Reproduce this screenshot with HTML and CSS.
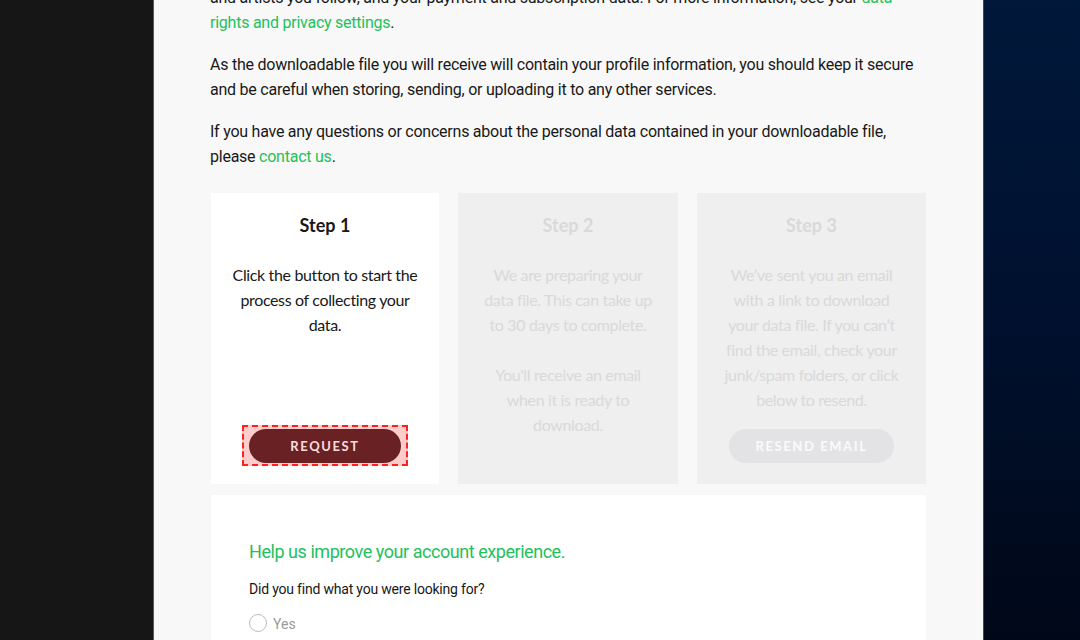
FILE: index.html
```html
<!DOCTYPE html>
<html lang="en">
<head>
<meta charset="utf-8">
<title>Download your data</title>
<link rel="stylesheet" href="styles.css">
</head>
<body>
<div class="shell">
  <aside class="side-left"></aside>
  <main class="page">
    <div class="intro">
      <p class="first">and artists you follow, and your payment and subscription data. For more information, see your <a href="#">data rights and privacy settings</a>.</p>
      <p>As the downloadable file you will receive will contain your profile information, you should keep it secure and be careful when storing, sending, or uploading it to any other services.</p>
      <p>If you have any questions or concerns about the personal data contained in your downloadable file, please <a href="#">contact us</a>.</p>
    </div>

    <div class="steps">
      <section class="step active">
        <h3 class="step-title">Step 1</h3>
        <p class="step-text">Click the button to start the process of collecting your data.</p>
        <div class="step-action">
          <span class="highlight"><button class="btn btn-request">REQUEST</button></span>
        </div>
      </section>
      <section class="step muted">
        <h3 class="step-title">Step 2</h3>
        <p class="step-text">We are preparing your data file. This can take up to 30 days to complete.</p>
        <p class="step-text">You'll receive an email when it is ready to download.</p>
      </section>
      <section class="step muted">
        <h3 class="step-title">Step 3</h3>
        <p class="step-text">We’ve sent you an email with a link to download your data file. If you can’t find the email, check your junk/spam folders, or click below to resend.</p>
        <div class="step-action">
          <button class="btn btn-resend">RESEND EMAIL</button>
        </div>
      </section>
    </div>

    <section class="feedback">
      <h2 class="feedback-title">Help us improve your account experience.</h2>
      <p class="feedback-q">Did you find what you were looking for?</p>
      <label class="radio"><span class="radio-dot"></span><span class="radio-label">Yes</span></label>
    </section>
  </main>
  <aside class="side-right"></aside>
</div>
</body>
</html>
```

FILE: styles.css
```css
* { box-sizing: border-box; }

html, body {
  margin: 0;
  padding: 0;
  height: 640px;
  overflow: hidden;
}

body {
  font-family: Roboto, "Liberation Sans", sans-serif;
  color: #181818;
  background: #151515;
}

.shell {
  display: flex;
  height: 640px;
}

.side-left {
  width: 154px;
  flex: none;
  background: #161616;
  border-right: 1px solid #5a5a5a;
}

.side-right {
  width: 97px;
  flex: none;
  background: linear-gradient(180deg, #00183a 0%, #001130 45%, #000818 100%);
  border-left: 1px solid #3c4a66;
}

.page {
  flex: 1;
  background: #f8f8f8;
  padding: 0 57px 0 56px;
  overflow: hidden;
}

.intro {
  display: flex;
  flex-direction: column;
  gap: 17px;
  margin-top: -15px;
}

.intro p {
  margin: 0;
  font-size: 16px;
  line-height: 25px;
  letter-spacing: -0.24px;
}

.intro a {
  color: #1ec15c;
  text-decoration: none;
}

.steps {
  display: grid;
  grid-template-columns: 228px 220px 229px;
  gap: 19px;
  margin-top: 24px;
  padding-left: 1px;
}

.step {
  height: 291px;
  padding: 20px 22px 21px;
  display: flex;
  flex-direction: column;
  align-items: center;
  text-align: center;
  font-family: Lato, "Noto Sans", sans-serif;
}

.step.active {
  background: #ffffff;
  color: #181818;
  padding: 20px 18px 18px;
}

.step.muted {
  background: #efefef;
  color: #d9d9d9;
}

.step-title {
  margin: 0 0 25px;
  font-size: 18px;
  line-height: 24px;
  font-weight: 700;
}

.step-text {
  margin: 0 0 25px;
  font-size: 16px;
  line-height: 25px;
  letter-spacing: -0.35px;
}

.step.muted .step-text:last-of-type { margin-bottom: 0; }

.step-action {
  margin-top: auto;
  display: flex;
  justify-content: center;
}

.highlight {
  display: inline-flex;
  padding: 2px 5px 1px 5px;
  border: 2px dashed #ff2020;
  background: #ffcccc;
}

.btn {
  height: 34px;
  border: 0;
  border-radius: 17px;
  font-family: Lato, "Noto Sans", sans-serif;
  font-weight: 700;
  font-size: 13px;
  letter-spacing: 1.6px;
  color: #ffffff;
  padding: 0;
}

.btn-request {
  width: 152px;
  background: #6a2123;
  color: #f8dede;
}

.btn-resend {
  width: 165px;
  background: #e3e3e5;
  color: #fafafa;
}

.feedback {
  margin-top: 11px;
  margin-left: 1px;
  background: #ffffff;
  padding: 45px 38px 40px;
}

.feedback-title {
  margin: 0;
  font-size: 18px;
  line-height: 24px;
  font-weight: 400;
  color: #1ec15c;
  letter-spacing: -0.45px;
}

.feedback-q {
  margin: 15px 0 0;
  font-size: 14px;
  line-height: 20px;
  letter-spacing: -0.2px;
}

.radio {
  display: flex;
  align-items: center;
  gap: 6px;
  margin-top: 14px;
}

.radio-dot {
  width: 18px;
  height: 18px;
  border-radius: 50%;
  border: 1px solid #bdbdbd;
  background: #fff;
}

.radio-label {
  font-size: 14px;
  color: #9a9a9a;
  padding-top: 3px;
}
```
